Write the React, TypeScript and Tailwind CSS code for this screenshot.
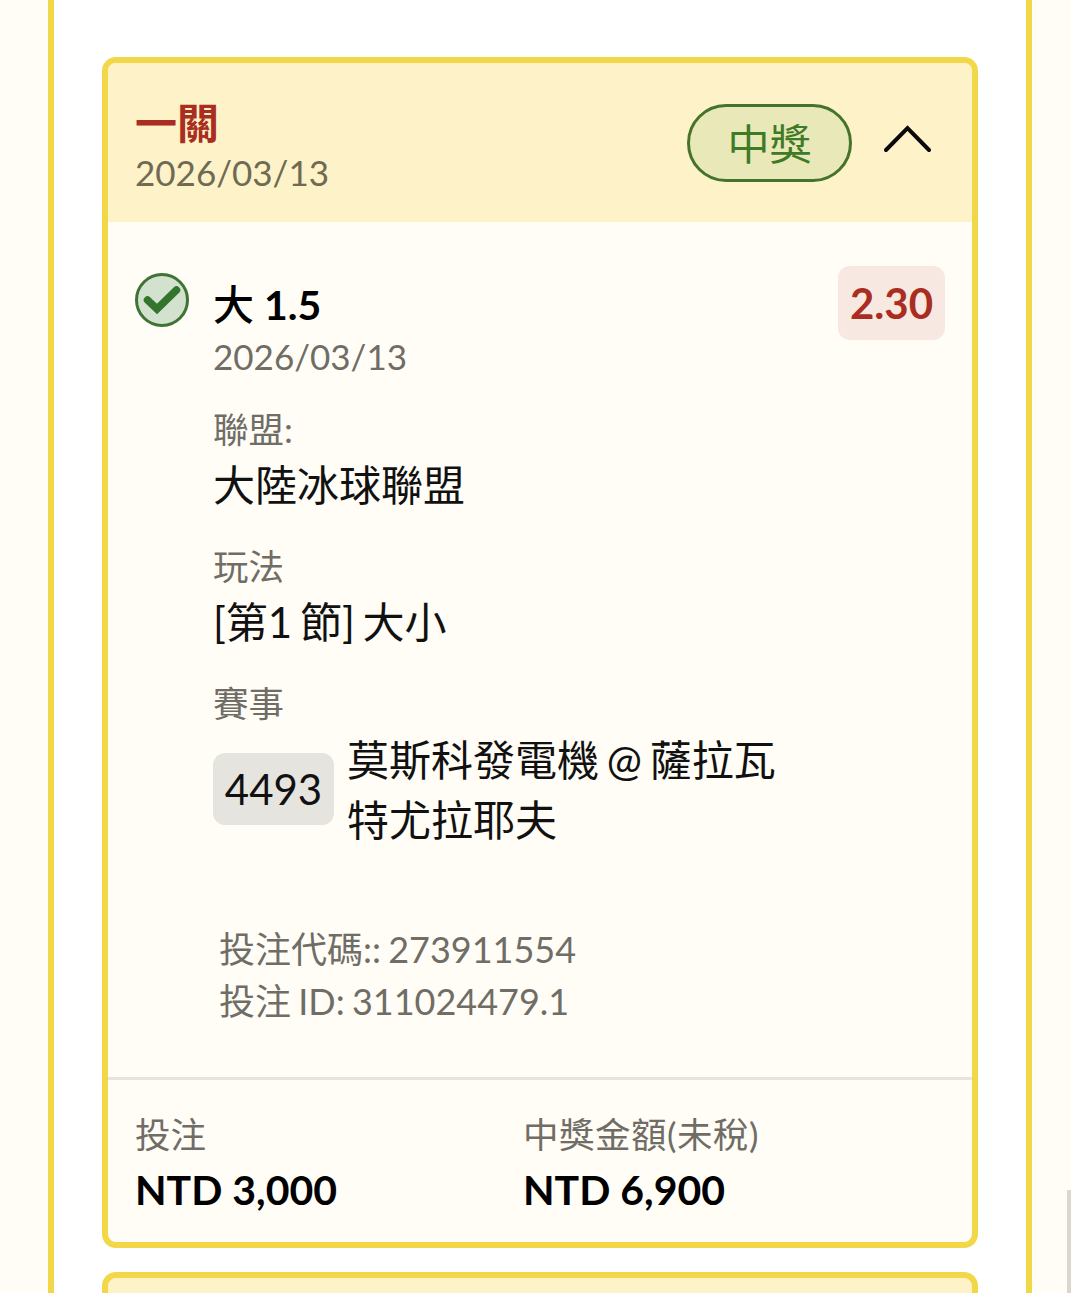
import React from "react";

const sans = "font-['Lato','Noto_Sans_CJK_TC',sans-serif]";

function Check() {
  return (
    <svg width="54" height="54" viewBox="0 0 54 54" className="shrink-0">
      <circle cx="27" cy="27" r="25.5" fill="#d3e2cf" stroke="#3f7336" strokeWidth="3" />
      <path d="M12.5 27 L22 36 L41.5 17" fill="none" stroke="#33752c" strokeWidth="7.5" strokeLinecap="round" strokeLinejoin="miter" />
    </svg>
  );
}

function Field({ label, children }: { label: string; children: React.ReactNode }) {
  return (
    <div className="flex flex-col">
      <div className="text-[35.5px] leading-[51px] text-[#6f6d66]">{label}</div>
      <div className="text-[42px] leading-[60px] text-[#111] [word-spacing:-3px]">{children}</div>
    </div>
  );
}

export default function App() {
  return (
    <div className={`relative h-[1293px] w-[1071px] overflow-hidden bg-[#fffdf6] ${sans}`}>
      <div className="ml-[48px] h-full w-[984px] border-x-[6px] border-[#f2d748] bg-white px-[48px] pt-[57px]">
        <div className="overflow-hidden rounded-[14px] border-[6px] border-[#f2d748] bg-[#fffdf6]">
          <div className="flex h-[159px] items-center justify-between bg-[#fdf2c8] pl-[27px] pr-[41px]">
            <div className="flex flex-col pt-[8px]">
              <div className="text-[42px] font-bold leading-[50px] text-[#a92d20]">一關</div>
              <div className="text-[35px] leading-[48px] text-[#6f6a52]">2026/03/13</div>
            </div>
            <div className="flex items-center gap-[32px]">
              <div className="flex h-[78px] w-[165px] items-center justify-center rounded-full border-[3px] border-[#457329] bg-[#e8e8b8] pt-[3px] text-[42px] text-[#3f7a25]">
                中獎
              </div>
              <svg width="47" height="28" viewBox="0 0 47 28" fill="none" stroke="#0a0a0a" strokeWidth="4" strokeLinecap="round" className="mb-[8px]">
                <path d="M2 25 L23.5 3 L45 25" />
              </svg>
            </div>
          </div>

          <div className="relative flex gap-[24px] px-[27px] pt-[51px]">
            <Check />
            <div className="flex flex-1 flex-col">
              <div className="flex items-start justify-between">
                <div className="flex flex-col pt-[6px]">
                  <div className="text-[41px] font-bold leading-[51px] text-black">
                    <span className="font-medium">大</span> 1.5
                  </div>
                  <div className="text-[35px] leading-[52px] text-[#6f6d66]">2026/03/13</div>
                </div>
                <div className="-mt-[7px] flex h-[74px] w-[107px] items-center justify-center rounded-[12px] bg-[#f7e8e2] text-[42px] font-bold text-[#a92d20]">
                  2.30
                </div>
              </div>
              <div className="mt-[22px] flex flex-col gap-[26px]">
                <Field label="聯盟:">大陸冰球聯盟</Field>
                <Field label="玩法">[第1 節] 大小</Field>
                <div className="flex flex-col">
                  <div className="text-[35.5px] leading-[51px] text-[#6f6d66]">賽事</div>
                  <div className="flex items-center gap-[13px]">
                    <div className="mb-[1px] flex h-[72px] w-[121px] items-center justify-center rounded-[12px] bg-[#e6e4de] text-[42px] text-[#111]">4493</div>
                    <div className="w-[440px] pt-[1px] text-[42px] leading-[60px] text-[#111] [word-spacing:-3px]">莫斯科發電機 @ 薩拉瓦特尤拉耶夫</div>
                  </div>
                </div>
              </div>
            </div>
          </div>

          <div className="mt-[73px] flex flex-col pl-[111px] text-[36px] leading-[52px] text-[#6f6d66] [word-spacing:-2px]">
            <div>投注代碼:: 273911554</div>
            <div>投注 ID: 311024479.1</div>
          </div>

          <div className="mt-[50px] grid grid-cols-[388px_1fr] border-t-[3px] border-[#e6e4de] px-[27px] pb-[25px] pt-[27px]">
            <div className="flex flex-col">
              <div className="text-[35.5px] leading-[55px] text-[#6f6d66]">投注</div>
              <div className="text-[41px] font-bold leading-[55px] text-black">NTD 3,000</div>
            </div>
            <div className="flex flex-col">
              <div className="text-[35.5px] leading-[55px] tracking-[0.5px] text-[#6f6d66]">中獎金額(未稅)</div>
              <div className="text-[41px] font-bold leading-[55px] text-black">NTD 6,900</div>
            </div>
          </div>
        </div>

        <div className="mt-[24px] h-[60px] rounded-t-[14px] border-[6px] border-[#f2d748] bg-[#fdf2c8]" />
      </div>
      <div className="absolute bottom-0 right-0 h-[103px] w-[4px] bg-[#d9d7d0]" />
    </div>
  );
}
